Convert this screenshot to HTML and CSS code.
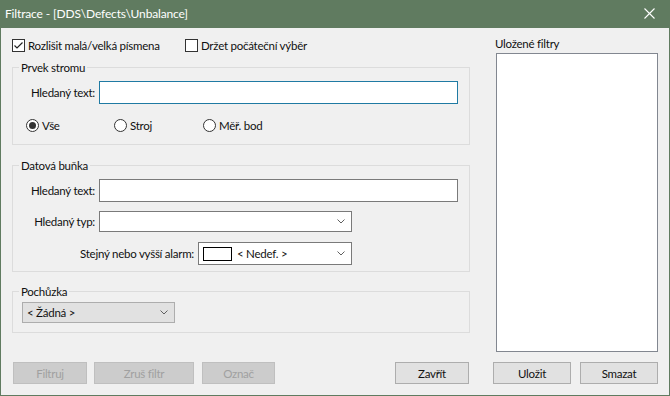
FILE: index.html
```html
<!DOCTYPE html>
<html lang="cs">
<head>
    <meta charset="UTF-8">
    <title>Filtrace</title>
    <link rel="stylesheet" href="styles.css">
</head>
<body>
    <div class="window">
        <div class="titlebar">
            <span class="title">Filtrace - [DDS\Defects\Unbalance]</span>
            <svg class="close" width="11" height="11" viewBox="0 0 11 11">
                <path d="M0.5 0.5 L10.5 10.5 M10.5 0.5 L0.5 10.5" stroke="#fff" stroke-width="1.1" fill="none"/>
            </svg>
        </div>

        <div class="client">
            <div class="main">
                <div class="options">
                    <label class="check check-case">
                        <span class="box">
                            <svg width="11" height="11" viewBox="0 0 11 11"><polyline points="1.5,5.5 4,8 9.5,2.5" fill="none" stroke="#222" stroke-width="1.2"/></svg>
                        </span>
                        Rozlišit malá/velká písmena
                    </label>
                    <label class="check">
                        <span class="box"></span>
                        Držet počáteční výběr
                    </label>
                </div>

                <fieldset class="group group-tree">
                    <legend>Prvek stromu</legend>
                    <div class="field">
                        <span class="field-label">Hledaný text:</span>
                        <div class="textbox focused wide"></div>
                    </div>
                    <div class="radios">
                        <label class="radio"><span class="dot checked"></span>Vše</label>
                        <label class="radio"><span class="dot"></span>Stroj</label>
                        <label class="radio"><span class="dot"></span>Měř. bod</label>
                    </div>
                </fieldset>

                <fieldset class="group group-cell">
                    <legend>Datová buňka</legend>
                    <div class="field">
                        <span class="field-label">Hledaný text:</span>
                        <div class="textbox wide"></div>
                    </div>
                    <div class="field field-type">
                        <span class="field-label">Hledaný typ:</span>
                        <div class="combo combo-type">
                            <span class="combo-text"></span>
                            <svg class="chevron" width="8" height="5" viewBox="0 0 8 5"><polyline points="0.5,0.5 4,4 7.5,0.5" fill="none" stroke="#606060"/></svg>
                        </div>
                    </div>
                    <div class="field field-alarm">
                        <span class="field-label alarm-label">Stejný nebo vyšší alarm:</span>
                        <div class="combo combo-alarm">
                            <span class="swatch"></span>
                            <span class="combo-text">&lt; Nedef. &gt;</span>
                            <svg class="chevron" width="8" height="5" viewBox="0 0 8 5"><polyline points="0.5,0.5 4,4 7.5,0.5" fill="none" stroke="#606060"/></svg>
                        </div>
                    </div>
                </fieldset>

                <fieldset class="group group-route">
                    <legend>Pochůzka</legend>
                    <div class="combo combo-route">
                        <span class="combo-text">&lt; Žádná &gt;</span>
                        <svg class="chevron" width="8" height="5" viewBox="0 0 8 5"><polyline points="0.5,0.5 4,4 7.5,0.5" fill="none" stroke="#606060"/></svg>
                    </div>
                </fieldset>

                <div class="buttons">
                    <button class="btn btn-filter" disabled>Filtruj</button>
                    <button class="btn btn-clear" disabled>Zruš filtr</button>
                    <button class="btn btn-mark" disabled>Označ</button>
                    <button class="btn btn-close">Zavřít</button>
                </div>
            </div>

            <div class="saved">
                <div class="saved-label">Uložené filtry</div>
                <div class="listbox"></div>
                <div class="buttons saved-buttons">
                    <button class="btn btn-save">Uložit</button>
                    <button class="btn btn-delete">Smazat</button>
                </div>
            </div>
        </div>
    </div>
</body>
</html>
```

FILE: styles.css
```css
* {
    box-sizing: border-box;
}
body {
    margin: 0;
    font-family: Lato, 'Noto Sans', sans-serif;
    font-size: 11.5px;
    letter-spacing: -0.25px;
    color: #111;
    background-color: #f0f0f0;
}
.window {
    width: 670px;
    height: 396px;
    border: 1px solid #607b60;
    border-top: none;
    background-color: #f0f0f0;
    display: flex;
    flex-direction: column;
}
.titlebar {
    height: 28px;
    background-color: #607b60;
    color: #fff;
    display: flex;
    align-items: center;
    padding: 0 10px 0 4px;
    font-size: 12px;
    letter-spacing: -0.15px;
}
.title {
    flex: 1;
    margin-top: -1px;
}
.close {
    margin-right: 4px;
    margin-top: -1px;
}
.client {
    flex: 1;
    display: flex;
}

/* left part */
.main {
    width: 458px;
    margin-left: 11px;
    padding: 10px 0 11px;
    display: flex;
    flex-direction: column;
}
.options {
    display: flex;
    height: 14px;
    align-items: center;
}
.check {
    display: flex;
    align-items: center;
    white-space: nowrap;
}
.check-case {
    width: 173px;
}
.box {
    width: 13px;
    height: 13px;
    border: 1px solid #333;
    background-color: #fff;
    margin-right: 3px;
    display: flex;
    align-items: center;
    justify-content: center;
}
.group {
    margin: 0;
    padding: 0;
    border: 1px solid #dcdcdc;
    min-width: 0;
}
.group legend {
    margin-left: 6px;
    padding: 0 2px;
    height: 15px;
    line-height: 15px;
}
.group-tree {
    margin-top: 8px;
    padding: 6px 0 11px;
}
.group-cell {
    margin-top: 13px;
    padding: 6px 0 6px;
}
.group-route {
    margin-top: 12px;
    padding: 3px 0 9px;
}
.field {
    display: flex;
    align-items: center;
}
.field-label {
    width: 82px;
    text-align: right;
    margin-right: 4px;
    white-space: nowrap;
}
.alarm-label {
    width: 181px;
}
.field-type {
    margin-top: 9px;
}
.field-alarm {
    margin-top: 10px;
}
.textbox {
    height: 23px;
    border: 1px solid #7a7a7a;
    background-color: #fff;
}
.textbox.wide {
    width: 359px;
}
.textbox.focused {
    border-color: #1f7aa3;
}
.radios {
    display: flex;
    height: 15px;
    margin-top: 14px;
    padding-left: 13px;
    align-items: center;
}
.radio {
    display: flex;
    align-items: center;
    width: 88px;
    white-space: nowrap;
}
.radio + .radio {
    width: 89px;
}
.dot {
    width: 13px;
    height: 13px;
    border: 1px solid #333;
    border-radius: 50%;
    background-color: #fff;
    margin-right: 3px;
    display: flex;
    align-items: center;
    justify-content: center;
}
.dot.checked::after {
    content: "";
    width: 7px;
    height: 7px;
    border-radius: 50%;
    background-color: #333;
}
.combo {
    display: flex;
    align-items: center;
    border: 1px solid #7a7a7a;
    background-color: #fff;
    padding: 0 6px 0 4px;
}
.combo-text {
    flex: 1;
    white-space: nowrap;
}
.combo-type {
    width: 253px;
    height: 21px;
}
.combo-alarm {
    width: 154px;
    height: 23px;
}
.swatch {
    width: 29px;
    height: 14px;
    border: 1px solid #000;
    background-color: #fff;
    margin-right: 5px;
}
.combo-route {
    width: 153px;
    height: 21px;
    margin-left: 9px;
    background-color: #e1e1e1;
    border-color: #adadad;
}

/* buttons */
.buttons {
    display: flex;
    margin-top: auto;
    padding-left: 1px;
}
.btn {
    height: 22px;
    padding: 0;
    font-family: inherit;
    font-size: 11.5px;
    letter-spacing: -0.25px;
    color: #111;
    background-color: #e1e1e1;
    border: 1px solid #adadad;
}
.btn:disabled {
    color: #a0a0a0;
    background-color: #cccccc;
    border-color: #bfbfbf;
}
.btn-filter {
    width: 74px;
}
.btn-clear {
    width: 100px;
    margin-left: 7px;
}
.btn-mark {
    width: 73px;
    margin-left: 8px;
}
.btn-close {
    width: 74px;
    margin-left: auto;
    margin-right: 1px;
}

/* right part */
.saved {
    width: 165px;
    margin-left: 23px;
    padding: 8px 0 11px;
    display: flex;
    flex-direction: column;
}
.saved-label {
    height: 17px;
    line-height: 15px;
    padding-left: 2px;
}
.listbox {
    width: 162px;
    height: 299px;
    margin-left: 3px;
    border: 1px solid #828790;
    background-color: #fff;
}
.saved-buttons {
    padding-left: 0;
    justify-content: space-between;
}
.btn-save,
.btn-delete {
    width: 78px;
}
```
